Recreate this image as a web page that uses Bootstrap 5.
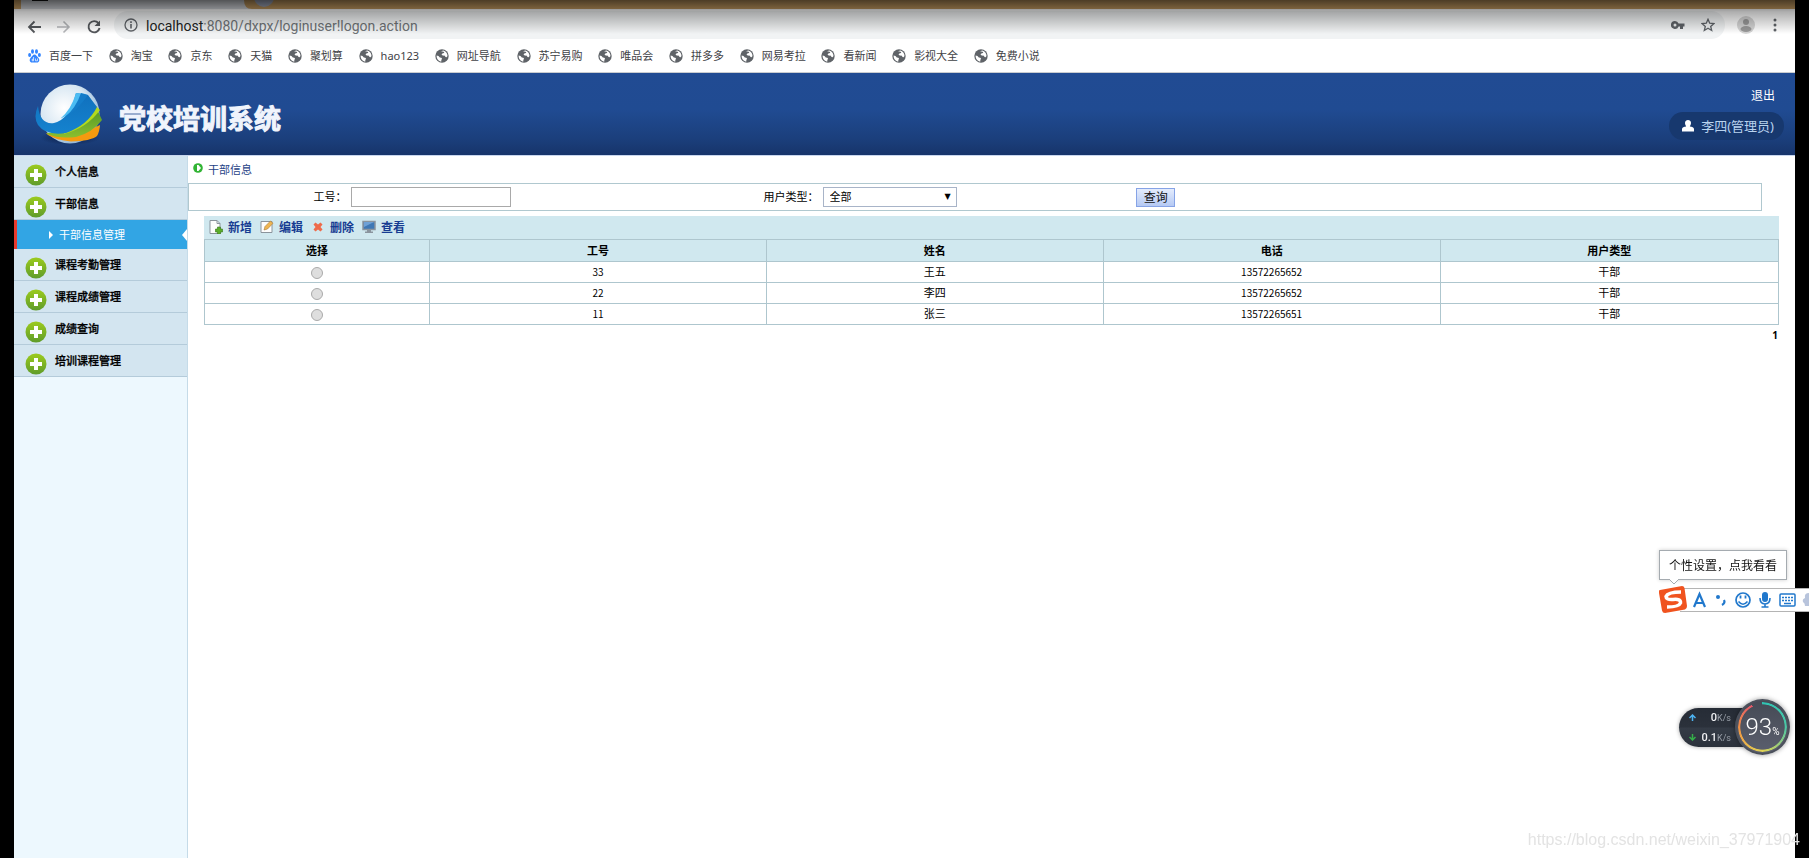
<!DOCTYPE html>
<html lang="zh-CN">
<head>
<meta charset="utf-8">
<meta name="viewport" content="width=device-width, initial-scale=1">
<title>党校培训系统</title>
<link href="https://cdn.jsdelivr.net/npm/bootstrap@5.3.0/dist/css/bootstrap.min.css" rel="stylesheet">
<style>
  body { background: #000; padding: 0 14px; font: 11px/16px "Noto Sans", "Noto Sans CJK SC", sans-serif; color: #000; }
  a { text-decoration: none; color: inherit; }
  svg { flex: none; display: block; }
  .window { background: #fff; }

  /* browser chrome */
  .tabstrip { height: 9px; background: #cda265; padding-left: 7px; }
  .tab-front { width: 223px; height: 9px; background: #dee1e6; }
  .shade { inset: 0 0 auto 0; height: 36px; background: linear-gradient(#000000a0, #00000050 12px, #0000 34px); pointer-events: none; }
  .toolbar-row { height: 30px; padding: 2px 12px 0 12px; gap: 12px; }
  .nav-icons { gap: 14px; }
  .omnibox { background: #f1f3f4; border-radius: 14px; height: 28px; padding: 0 10px; gap: 8px; }
  .url { font: 14px/20px Roboto, sans-serif; color: #6f7377; padding-top: 2px; }
  .url b { font-weight: 400; color: #222; }
  .bookmarks { height: 34px; padding: 0 14px; color: #3f4246; border-bottom: 1px solid #c9ccd0; }
  .bookmark-list { width: 1012px; }
  .bookmarks a { display: flex; align-items: center; gap: 8px; }

  /* application */
  .app-header { height: 83px; background: linear-gradient(#214b93, #204b92 45%, #1b3f7c 80%, #17346a); border-bottom: 1px solid #c8d6ee; padding: 0 11px 0 20px; color: #fff; }
  .app-title { font: 700 27px/32px "Noto Sans CJK SC", sans-serif; margin: 8px 0 0; -webkit-text-stroke: 1px #f0f4fc; color: #f0f4fc; }
  .logout { font-size: 12px; margin-right: 9px; }
  .user-pill { background: #17386e; border-radius: 14px; height: 28px; padding: 0 10px 0 13px; gap: 7px; font-size: 13px; color: #b9d3ee; }
  .sidebar { width: 174px; background: #edf8fe; border-right: 1px solid #c5dbe8; flex: none; min-height: 702px; }
  .side-link { height: 32px; padding: 0 0 0 11px; gap: 8px; background: #d3e5f0; border-bottom: 1px solid #b4cbda; display: flex; align-items: center; font-weight: 500; -webkit-text-stroke: 0.3px; }
  .side-link svg { margin-top: 7px; }
  .side-sub { height: 29px; padding-left: 32px; gap: 5px; border-left: 3px solid #e8392d; background: #32a5e4; color: #fff; display: flex; align-items: center; }
  .side-sub .notch { margin-left: auto; }
  .crumb { height: 27px; padding: 4px 0 0 5px; gap: 5px; color: #1e4286; }
  .crumb span { padding-top: 2px; }
  .search { border: 1px solid #b0c8cf; height: 28px; margin-right: 33px; }
  .search .cell-a { width: 28%; } .search .cell-b { width: 29%; } .search .cell-c { width: 9%; }
  .search .cell-a, .search .cell-b { gap: 4px; padding-left: 6px; }
  .field { width: 160px; height: 20px; border: 1px solid #a9a9a9; outline: 0; padding: 0 4px; font: inherit; background: #fff; }
  .pick-wrap { position: relative; }
  .pick { width: 134px; height: 20px; border: 1px solid #a8b4c8; background: #fff; appearance: none; padding: 0 6px; font: inherit; color: #000; border-radius: 0; display: block; }
  .pick-wrap::after { content: "▼"; position: absolute; right: 6px; top: 2px; font: 8px/16px "DejaVu Sans", sans-serif; pointer-events: none; }
  .query { width: 39px; height: 19px; border: 1px solid #86a3e6; background: linear-gradient(#e4ecfc, #b5c9f4); padding: 0; font: 12px/16px "Noto Sans CJK SC", sans-serif; color: #111; }
  .panel { margin: 5px 16px 0; }
  .tools { height: 23px; background: #d0e8ef; padding: 0 5px 2px; gap: 8px; }
  .tools button { border: 0; background: none; padding: 0; font: 700 12px/18px "Noto Sans CJK SC", sans-serif; color: #173c92; display: flex; align-items: center; gap: 5px; }
  .grid { width: 100%; table-layout: fixed; border-collapse: collapse; text-align: center; }
  .grid th, .grid td { border: 1px solid #aec6ce; padding: 0; height: 21px; line-height: 18px; }
  .grid th { background: #d0e8ef; font-weight: 700; height: 22px; }
  .grid .num { font: 10px/18px "Noto Sans CJK SC", sans-serif; }
  .grid input { appearance: none; width: 12px; height: 12px; border: 1px solid #aaa; border-radius: 50%; background: #dedede; display: block; margin: 1px auto 0; }
  .pages { padding: 2px 1px 0; font: 700 10px/16px "Noto Sans", sans-serif; }

  /* desktop widgets floating over the window */
  .tip { position: fixed; right: 22px; bottom: 278px; width: 128px; height: 30px; border: 1px solid #a5abb0; background: #fff; box-shadow: 0 0 4px #0003; font: 12px/28px "Noto Sans CJK SC", sans-serif; text-align: center; color: #111; }
  .tip svg { position: absolute; left: 8px; top: 27px; }
  .ime { position: fixed; right: 0; bottom: 246px; width: 129px; height: 24px; background: #fff; border: 1px solid #b4b4b4; border-width: 1px 0; }
  .ime svg { margin-left: -21px; }
  .net { position: fixed; right: 19px; bottom: 103px; }
  .net .rates { background: linear-gradient(#262c36, #2b313b 49%, #343b46 51%, #2c323c); border-radius: 20px 0 0 20px; width: 80px; height: 39px; padding: 0 28px 0 10px; margin-right: -24px; color: #999fa8; font: 9px/20px Roboto, sans-serif; box-shadow: 0 0 4px #0005; }
  .net .rates b { font: 500 11px/20px Roboto, sans-serif; color: #f0f1f3; }
  .dial { position: relative; width: 55px; height: 56px; border-radius: 50%; background: linear-gradient(#454a55, #5b5f6e); border: 2px solid #4b505b; box-shadow: 0 0 5px #0006; color: #fff; font: 300 24px/26px Roboto, sans-serif; }
  .dial small { font: 10px/12px Roboto, sans-serif; margin-top: 9px; }
  .dial::before { content: ""; position: absolute; inset: 1px; border-radius: 50%; background: conic-gradient(#2fc3b4, #4cc6a4 25%, #e0d354 50%, #f09a43 72%, #e2566a 93%, #0000 93%); mask: radial-gradient(closest-side, #0000 89%, #000 92%); -webkit-mask: radial-gradient(closest-side, #0000 89%, #000 92%); }
  .watermark { position: fixed; right: 9px; bottom: 8px; font: 16px/20px "Liberation Sans", sans-serif; color: #e3e3e3; }
</style>
</head>
<body>
<svg width="0" height="0" class="position-absolute" aria-hidden="true">
  <defs>
    <linearGradient id="lime" x2="0" y2="1"><stop stop-color="#9ccb1e"/><stop offset="1" stop-color="#5f9c2b"/></linearGradient>
    <symbol id="globe" viewBox="0 0 14 14"><circle cx="7" cy="7" r="6.700" fill="#5f6368"/><path d="M1.600 6.500 3.500 7l1.300 1.600 1.500.2.800 1-.8 1.300.1 1.500C3.800 12.300 1.500 10 1.600 6.500zM6 2.200l2.300-.6c2.500.6 4.200 2.800 4.200 5.400l-.9 1.200-1.200-.2-.4-1.300-2.300-.2-1.200-1 1.200-1.300 1.600-.2-.6-1.300z" fill="#fff"/></symbol>
    <symbol id="plus" viewBox="0 0 22 22"><circle cx="11" cy="11" r="10.500" fill="url(#lime)"/><path d="M9 5h4v4h4v4h-4v4H9v-4H5V9h4z" fill="#fff"/></symbol>
  </defs>
</svg>

<div class="window">
  <div class="position-relative">
    <div class="tabstrip d-flex">
      <svg class="tab-front" width="223" height="9"><path d="M11 0h16v1H11z" fill="#111"/><path d="M0 0v9q-7 0-7 0" fill="none"/></svg>
      <svg width="44" height="9"><path d="M0 0Q0 9 8 9H0z" fill="#dee1e6"/><circle cx="20" cy="-3" r="10" fill="#aab2c8"/></svg>
    </div>
    <div class="toolbar-row d-flex align-items-center">
      <div class="nav-icons d-flex align-items-center pt-1">
        <svg width="16" height="16" fill="none" stroke="#55585c" stroke-width="1.800"><path d="M15 8H3M8.500 2.500 3 8l5.500 5.500"/></svg>
        <svg width="16" height="16" fill="none" stroke="#b5b7ba" stroke-width="1.600"><path d="M1 8h12M7.500 2.500 13 8l-5.500 5.500"/></svg>
        <svg width="16" height="16" fill="none" stroke="#55585c" stroke-width="1.900"><path d="M12.500 4.200A5.600 5.600 0 1 0 13.600 9"/><path d="M14 1.500V7H8.500z" fill="#55585c" stroke="none"/></svg>
      </div>
      <div class="omnibox d-flex align-items-center flex-grow-1">
        <svg width="14" height="14" fill="none" stroke="#5f6368" stroke-width="1.300"><circle cx="7" cy="7" r="6"/><path d="M7 6v4.500M7 3.300v1.600" stroke-width="1.600"/></svg>
        <div class="url flex-grow-1"><b>localhost</b>:8080/dxpx/loginuser!logon.action</div>
        <svg width="14" height="10" fill="#5f6368"><path d="M4 1a4 4 0 1 0 3.600 5.500H9V9h3V6.500h1.500v-3H7.600A4 4 0 0 0 4 1zm0 2.500a1.500 1.500 0 1 1 0 3 1.500 1.500 0 0 1 0-3z"/></svg>
        <svg width="14" height="14" class="ms-2" fill="none" stroke="#5f6368" stroke-width="1.300"><path d="m7 1.300 1.700 3.900 4.200.4-3.200 2.800 1 4.100L7 10.300l-3.700 2.200 1-4.100L1.100 5.600l4.200-.4z"/></svg>
      </div>
      <svg width="18" height="18"><circle cx="9" cy="9" r="9" fill="#d6d6d6"/><circle cx="9" cy="6" r="3" fill="#9a9a9a"/><ellipse cx="9" cy="13" rx="5.500" ry="3" fill="#9a9a9a"/></svg>
      <svg width="16" height="14" fill="#5f6368"><circle cx="8" cy="2" r="1.500"/><circle cx="8" cy="7" r="1.500"/><circle cx="8" cy="12" r="1.500"/></svg>
    </div>
    <div class="shade position-absolute"></div>
  </div>

  <nav class="bookmarks d-flex align-items-center overflow-hidden text-nowrap">
    <div class="bookmark-list d-flex justify-content-between">
    <a href="#"><svg width="13" height="14" fill="#3385ff"><ellipse cx="4.500" cy="2.500" rx="1.500" ry="2.200"/><ellipse cx="8.500" cy="2.500" rx="1.500" ry="2.200"/><ellipse cx="1.600" cy="6" rx="1.500" ry="2"/><ellipse cx="11.400" cy="6" rx="1.500" ry="2"/><path d="M6.500 5.500c1.600 0 2.500 2 4 3.400 1.500 1.600.8 4.600-1.500 4.600-1.200 0-3.800 0-5 0-2.300 0-3-3-1.500-4.600 1.500-1.400 2.400-3.400 4-3.400z"/><path d="M5.600 8v3.800H4.200v-1.600h1.400M7.500 9.500v2.300h2V9.500" fill="none" stroke="#fff" stroke-width=".7"/></svg>百度一下</a>
    <a href="#"><svg width="14" height="14"><use href="#globe"/></svg>淘宝</a>
    <a href="#"><svg width="14" height="14"><use href="#globe"/></svg>京东</a>
    <a href="#"><svg width="14" height="14"><use href="#globe"/></svg>天猫</a>
    <a href="#"><svg width="14" height="14"><use href="#globe"/></svg>聚划算</a>
    <a href="#"><svg width="14" height="14"><use href="#globe"/></svg>hao123</a>
    <a href="#"><svg width="14" height="14"><use href="#globe"/></svg>网址导航</a>
    <a href="#"><svg width="14" height="14"><use href="#globe"/></svg>苏宁易购</a>
    <a href="#"><svg width="14" height="14"><use href="#globe"/></svg>唯品会</a>
    <a href="#"><svg width="14" height="14"><use href="#globe"/></svg>拼多多</a>
    <a href="#"><svg width="14" height="14"><use href="#globe"/></svg>网易考拉</a>
    <a href="#"><svg width="14" height="14"><use href="#globe"/></svg>看新闻</a>
    <a href="#"><svg width="14" height="14"><use href="#globe"/></svg>影视大全</a>
    <a href="#"><svg width="14" height="14"><use href="#globe"/></svg>免费小说</a>
    </div>
  </nav>

  <header class="app-header d-flex align-items-center justify-content-between">
    <div class="d-flex align-items-center gap-3">
      <svg width="69" height="62" viewBox="0 0 69 62">
        <defs>
          <radialGradient id="ball" cx=".4" cy=".4" r=".65"><stop stop-color="#fff"/><stop offset=".65" stop-color="#d6e6f2"/><stop offset="1" stop-color="#87aed4"/></radialGradient>
          <linearGradient id="sea" x2="0" y2="1"><stop stop-color="#1070bd"/><stop offset="1" stop-color="#1583cf"/></linearGradient>
          <linearGradient id="leaf" x2="0" y2="1"><stop stop-color="#4f9426"/><stop offset="1" stop-color="#8bbf2e"/></linearGradient>
          <radialGradient id="cast"><stop stop-color="#0a1c44"/><stop offset="1" stop-color="#0a1c44" stop-opacity="0"/></radialGradient>
        </defs>
        <ellipse cx="36" cy="55" rx="30" ry="7" fill="url(#cast)"/>
        <circle cx="36" cy="31" r="29.500" fill="url(#ball)"/>
        <path d="M12 50Q45 54 66 42q-.5 7-3 11-6 5-26 5.500Q22 57 14 52z" fill="#f59a0f"/>
        <path d="M13 50Q45 48 62 24l6 13Q58 50 42 54 25 56 13 51z" fill="url(#leaf)"/>
        <path d="M30 49Q50 42 61 22l5 5Q53 45 30 51z" fill="#b4da1c"/>
        <path d="M4 23Q-1 34 4 42 12 53 32 50 54 42 63 24L54 12 42 10Q36 36 20 40 6 42 4 23z" fill="url(#sea)"/>
        <path d="M42 10Q37 27 26 36 37 31 43 23L52 11z" fill="#4bbcf3"/>
        <path d="M47 10Q42 25 31 34 43 28 54 12z" fill="#147cc9"/>
      </svg>
      <h1 class="app-title">党校培训系统</h1>
    </div>
    <div class="d-flex flex-column align-items-end gap-2">
      <a class="logout" href="#">退出</a>
      <a class="user-pill d-flex align-items-center" href="#"><svg width="12" height="12" fill="#fff"><path d="M6 0c2 0 3 1.400 3 3 0 1.500-.8 2.600-1.200 3.600C10 7 12 7.500 12 9v2.500H0V9c0-1.500 2-2 4.200-2.400C3.800 5.600 3 4.500 3 3c0-1.600 1-3 3-3z"/></svg><span>李四(管理员)</span></a>
    </div>
  </header>

  <div class="d-flex">
    <nav class="sidebar">
      <a class="side-link" href="#"><svg width="22" height="22"><use href="#plus"/></svg>个人信息</a>
      <a class="side-link" href="#"><svg width="22" height="22"><use href="#plus"/></svg>干部信息</a>
      <a class="side-sub" href="#"><svg width="5" height="8" fill="#fff"><path d="m0 0 4 4-4 4z"/></svg>干部信息管理<svg class="notch" width="5" height="12" fill="#fff"><path d="M5 0v12L0 6z"/></svg></a>
      <a class="side-link" href="#"><svg width="22" height="22"><use href="#plus"/></svg>课程考勤管理</a>
      <a class="side-link" href="#"><svg width="22" height="22"><use href="#plus"/></svg>课程成绩管理</a>
      <a class="side-link" href="#"><svg width="22" height="22"><use href="#plus"/></svg>成绩查询</a>
      <a class="side-link" href="#"><svg width="22" height="22"><use href="#plus"/></svg>培训课程管理</a>
    </nav>

    <main class="flex-grow-1">
      <div class="crumb d-flex"><svg width="10" height="14"><circle cx="5" cy="8" r="4.800" fill="#31b434"/><path d="M4 5h1.500L8 8l-2.500 3H4z" fill="#fff"/></svg><span>干部信息</span></div>
      <form class="search d-flex align-items-center" onsubmit="return false">
        <div class="cell-a d-flex align-items-center justify-content-center"><label for="empno">工号：</label><input class="field" id="empno" type="text"></div>
        <div class="cell-b d-flex align-items-center justify-content-center"><label for="utype">用户类型：</label><div class="pick-wrap"><select class="pick" id="utype"><option>全部</option></select></div></div>
        <div class="cell-c d-flex justify-content-center"><button class="query" type="submit">查询</button></div>
      </form>

      <section class="panel">
        <div class="tools d-flex align-items-center">
          <button type="button"><svg width="14" height="14"><path d="M1 .5h7l3 3v10H1z" fill="#fdfdfd" stroke="#8b949c"/><path d="M8 .5v3h3" fill="none" stroke="#8b949c"/><path d="M8.500 7h3v2h2v3h-2v2h-3v-2h-2V9h2z" fill="#5cae2b" stroke="#35761a" stroke-width=".6"/></svg>新增</button>
          <button type="button"><svg width="14" height="14"><path d="M1 1.500h11v11H1z" fill="#fdfdfd" stroke="#8b949c"/><path d="m4 10 1-3.500L10.500 1l2.500 2.300L7.500 9z" fill="#efb552" stroke="#a67a35" stroke-width=".6"/></svg>编辑</button>
          <button type="button"><svg width="14" height="14"><path d="m4.500 2.500 2.500 2 2.500-2 2 2L9.500 7l2 2.500-2 2-2.500-2-2.500 2-2-2 2-2.500-2-2.500z" fill="#ee6b4b"/></svg>删除</button>
          <button type="button"><svg width="14" height="14"><path d="M1 1.500h12v8H1z" fill="#3f78b5" stroke="#8a949e" stroke-width="1.500"/><path d="M2 2h10L2 7z" fill="#6fa1d6"/><path d="M5 10h4v1.500h2V13H3v-1.500h2z" fill="#8a949e"/></svg>查看</button>
        </div>
        <table class="grid">
          <colgroup><col style="width:14.3%"><col style="width:21.4%"><col style="width:21.4%"><col style="width:21.4%"><col style="width:21.5%"></colgroup>
          <thead><tr><th>选择</th><th>工号</th><th>姓名</th><th>电话</th><th>用户类型</th></tr></thead>
          <tbody>
            <tr><td><input type="radio" name="pick" aria-label="王五"></td><td class="num">33</td><td>王五</td><td class="num">13572265652</td><td>干部</td></tr>
            <tr><td><input type="radio" name="pick" aria-label="李四"></td><td class="num">22</td><td>李四</td><td class="num">13572265652</td><td>干部</td></tr>
            <tr><td><input type="radio" name="pick" aria-label="张三"></td><td class="num">11</td><td>张三</td><td class="num">13572265651</td><td>干部</td></tr>
          </tbody>
        </table>
        <div class="pages text-end">1</div>
      </section>
    </main>
  </div>
</div>

<div class="watermark">https://blog.csdn.net/weixin_37971904</div>

<div class="ime d-flex align-items-center">
  <svg width="150" height="32" viewBox="0 0 150 32" fill="none" stroke="#2178cc">
    <path d="m1 6 22-4q2 0 2.500 2L28 22q0 3-2 3.500L6 29q-2.500 0-3-2.500L0 9Q-1 7 1 6z" fill="#f0531f" stroke="none"/>
    <path d="M22 8Q9 8 7 12.500 7 16 14 15.500 22 14.500 21.500 19 20 23 8 23" stroke="#fff" stroke-width="3.500"/>
    <path d="m35 23 5.500-13L46 23M37 19h7" stroke-width="2.200"/>
    <circle cx="59" cy="13" r="2" fill="#2178cc" stroke="none"/><path d="M65 16q1.500 3-2 5" stroke-width="2.200"/>
    <circle cx="84" cy="16" r="7" stroke-width="1.700"/><path d="M79.500 17.500q4.500 5.500 9 0" stroke-width="1.500"/><path d="M81.500 11.500v3M86.500 11.500v3" stroke-width="1.800"/>
    <rect x="103" y="8" width="6" height="10" rx="3" fill="#2178cc" stroke="none"/><path d="M101 14q0 6 5 6t5-6M106 20v3M102.500 23h7" stroke-width="1.600"/>
    <rect x="121" y="10" width="15" height="12" rx="1" stroke-width="1.500"/><path d="M123 13.500h11M123 16.500h11" stroke-dasharray="2 1" stroke-width="1.700"/><path d="M125 19.500h7" stroke-width="1.500"/>
    <path d="M150 9q-5 0-4 5-3 1-2 4 2 1 2 4h4z" fill="#b8c4dc" stroke="none"/>
  </svg>
</div>
<div class="tip">个性设置，点我看看<svg width="12" height="8"><path d="m1 1 5 5 5-5" fill="#fff" stroke="#a5abb0"/></svg></div>

<div class="net d-flex align-items-center">
  <div class="rates">
    <div class="d-flex align-items-center justify-content-between"><svg width="7" height="7" fill="none" stroke="#4db2f0" stroke-width="1.500"><path d="M3.500 7V1M.5 4l3-3 3 3"/></svg><span><b>0</b>K/s</span></div>
    <div class="d-flex align-items-center justify-content-between"><svg width="7" height="7" fill="none" stroke="#35b04a" stroke-width="1.500"><path d="M3.500 0v6M.5 3l3 3 3-3"/></svg><span><b>0.1</b>K/s</span></div>
  </div>
  <div class="dial d-flex align-items-center justify-content-center">93<small>%</small></div>
</div>
<script src="https://cdn.jsdelivr.net/npm/bootstrap@5.3.0/dist/js/bootstrap.bundle.min.js"></script>
</body>
</html>
